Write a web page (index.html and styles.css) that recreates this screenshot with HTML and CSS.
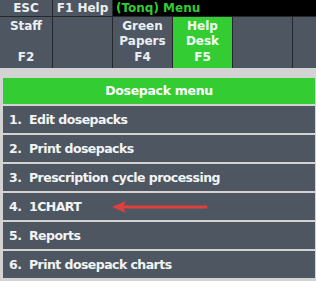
FILE: index.html
```html
<!DOCTYPE html>
<html lang="en">
<head>
    <meta charset="UTF-8">
    <title>Dosepack menu</title>
    <link rel="stylesheet" href="styles.css">
</head>
<body>
<div id="top-bar">
    <div class="top-key">ESC</div>
    <div class="top-key">F1 Help</div>
    <div class="top-title">(Tonq) Menu</div>
</div>

<div id="fkey-bar">
    <div class="fkey first">
        <span class="fkey-label">Staff</span>
        <span class="fkey-code">F2</span>
    </div>
    <div class="fkey"></div>
    <div class="fkey">
        <span class="fkey-label">Green<br>Papers</span>
        <span class="fkey-code">F4</span>
    </div>
    <div class="fkey active">
        <span class="fkey-label">Help<br>Desk</span>
        <span class="fkey-code">F5</span>
    </div>
    <div class="fkey"></div>
    <div class="fkey last"></div>
</div>

<div id="menu">
    <div class="menu-header">Dosepack menu</div>
    <div class="menu-item"><span class="num">1.</span>Edit dosepacks</div>
    <div class="menu-item"><span class="num">2.</span>Print dosepacks</div>
    <div class="menu-item"><span class="num">3.</span>Prescription cycle processing</div>
    <div class="menu-item">
        <span class="num">4.</span>1CHART
        <svg class="arrow" width="96" height="12" viewBox="0 0 96 12">
            <polygon points="0,6 14,0 11,6 14,12" fill="#e0403c"/>
            <line x1="10" y1="6" x2="94" y2="6" stroke="#e0403c" stroke-width="3" stroke-linecap="round"/>
        </svg>
    </div>
    <div class="menu-item"><span class="num">5.</span>Reports</div>
    <div class="menu-item"><span class="num">6.</span>Print dosepack charts</div>
</div>
</body>
</html>
```

FILE: styles.css
```css
body {
    margin: 0;
    background-color: #d3d3d3;
    font-family: "DejaVu Sans", Verdana, sans-serif;
    font-weight: bold;
    font-size: 12px;
    color: #eceff1;
    overflow: hidden;
}

#top-bar {
    display: flex;
    height: 16px;
    background-color: #000;
    border-bottom: 1px solid #24282c;
}

.top-key {
    width: 52px;
    background-color: #4e5661;
    border-right: 1px solid #24282c;
    text-align: center;
    line-height: 16px;
}

.top-key + .top-key {
    width: 59px;
}

.top-title {
    color: #33cc33;
    padding-left: 3px;
    line-height: 16px;
}

#fkey-bar {
    display: flex;
    height: 51px;
}

.fkey {
    width: 59px;
    display: flex;
    flex-direction: column;
    justify-content: space-between;
    align-items: center;
    text-align: center;
    padding: 2px 0 3px;
    background-color: #4e5661;
    border-right: 1px solid #24282c;
    line-height: 15px;
}

.fkey.first {
    width: 52px;
}

.fkey.last {
    flex: 1;
    border-right: none;
}

.fkey.active {
    background-color: #33cc33;
    color: #f4fff4;
}

#menu {
    display: flex;
    flex-direction: column;
    gap: 2px;
    padding: 10px 1px 0 3px;
}

.menu-header {
    height: 26px;
    line-height: 26px;
    background-color: #33cc33;
    text-align: center;
    color: #fff;
    font-size: 12.5px;
    letter-spacing: -0.3px;
}

.menu-item {
    position: relative;
    height: 27px;
    line-height: 27px;
    padding-left: 6px;
    background-color: #4e5661;
    color: #f2f4f5;
    font-size: 12.5px;
    letter-spacing: -0.55px;
    white-space: nowrap;
}

.num {
    display: inline-block;
    width: 20px;
}

.arrow {
    position: absolute;
    left: 109px;
    top: 8px;
}
```
